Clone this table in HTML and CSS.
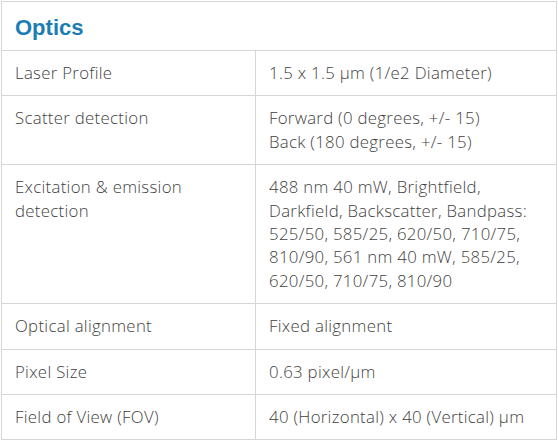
FILE: index.html
```html
<!DOCTYPE html>
<html>
<head>
<meta charset="utf-8">
<link rel="stylesheet" href="styles.css">
</head>
<body>
<div class="wrap">
<table class="spec">
  <thead>
    <tr><th colspan="2" class="title">Optics</th></tr>
  </thead>
  <tbody>
    <tr><td class="k">Laser Profile</td><td class="v">1.5 x 1.5 µm (1/e2 Diameter)</td></tr>
    <tr><td class="k">Scatter detection</td><td class="v">Forward (0 degrees, +/- 15)<br>Back (180 degrees, +/- 15)</td></tr>
    <tr><td class="k">Excitation &amp; emission detection</td><td class="v">488 nm 40 mW, Brightfield, Darkfield, Backscatter, Bandpass: 525/50, 585/25, 620/50, 710/75, 810/90, 561 nm 40 mW, 585/25, 620/50, 710/75, 810/90</td></tr>
    <tr><td class="k">Optical alignment</td><td class="v">Fixed alignment</td></tr>
    <tr><td class="k">Pixel Size</td><td class="v">0.63 pixel/µm</td></tr>
    <tr><td class="k">Field of View (FOV)</td><td class="v">40 (Horizontal) x 40 (Vertical) µm</td></tr>
  </tbody>
</table>
</div>
</body>
</html>
```
FILE: styles.css
```css
html, body { margin: 0; padding: 0; background: #fff; }
.wrap { padding: 1px 1px 0 1px; }
.spec {
  width: 556px;
  border-collapse: collapse;
  font-family: "Open Sans", sans-serif;
  font-weight: 300;
  font-size: 16.8px;
  letter-spacing: 0.3px;
  color: #3f3f3f;
}
.spec th, .spec td {
  border: 1px solid #d6d6d6;
  text-align: left;
  vertical-align: top;
}
.title {
  font-family: "Liberation Sans", Arial, sans-serif;
  font-weight: bold;
  font-size: 22px;
  letter-spacing: 0;
  color: #1b7db4;
  padding: 15px 13px 11px;
  line-height: 22px;
}
.spec td {
  padding: 10px 13px 11px;
  line-height: 23.4px;
}
.k { width: 227px; }
```
